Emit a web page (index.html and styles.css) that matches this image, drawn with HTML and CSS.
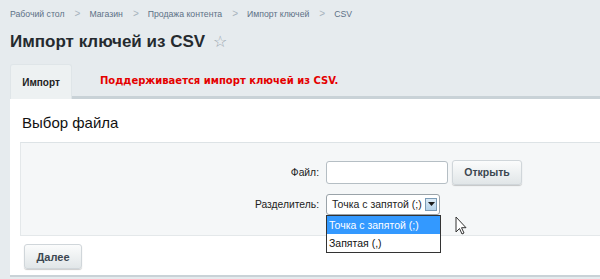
FILE: index.html
```html
<!DOCTYPE html>
<html>
<head>
<meta charset="utf-8">
<link rel="stylesheet" href="styles.css">
</head>
<body>
<div class="page">
  <nav class="crumbs">
    <span>Рабочий стол</span><span class="sep">&gt;</span>
    <span>Магазин</span><span class="sep">&gt;</span>
    <span>Продажа контента</span><span class="sep">&gt;</span>
    <span>Импорт ключей</span><span class="sep">&gt;</span>
    <span>CSV</span>
  </nav>
  <h1 class="title">Импорт ключей из CSV <span class="star">☆</span></h1>
  <div class="tabs">
    <div class="tab">Импорт</div>
    <div class="note">Поддерживается импорт ключей из CSV.</div>
  </div>
  <div class="panel">
    <h2 class="section">Выбор файла</h2>
    <div class="box">
      <div class="row">
        <label class="lbl">Файл:</label>
        <div class="field">
          <span class="input"></span>
          <span class="btn open">Открыть</span>
        </div>
      </div>
      <div class="row">
        <label class="lbl">Разделитель:</label>
        <div class="field">
          <div class="selwrap">
            <div class="select"><span>Точка с запятой (;)</span><span class="arrow"><svg width="7" height="4" viewBox="0 0 7 4"><path d="M0 0h7L3.5 4z" fill="#1a1a1a"/></svg></span></div>
            <div class="list">
              <div class="opt sel">Точка с запятой (;)</div>
              <div class="opt">Запятая (,)</div>
            </div>
          </div>
          <svg class="cursor" width="12" height="19" viewBox="0 0 12 19"><path d="M1 1v15l3.5-3.5 2.5 5.5 2-1-2.5-5.3H11z" fill="#fff" stroke="#333" stroke-width="1"/></svg>
        </div>
      </div>
    </div>
    <div class="footer"><span class="btn next">Далее</span></div>
  </div>
</div>
</body>
</html>
```
FILE: styles.css
```css
* { box-sizing: border-box; }
html, body { margin: 0; padding: 0; }
body {
  width: 600px; height: 279px; overflow: hidden;
  background: #e6ebee;
  font-family: "Liberation Sans", Arial, sans-serif;
  color: #000;
}
.page { padding: 0 0 0 10px; }
.crumbs {
  display: flex; align-items: center;
  height: 26px; padding-top: 1px;
  font-size: 8.7px; color: #5d7186;
}
.crumbs .sep { color: #a7b3bd; margin: 0 9px 0 10px; font-size: 10px; }
.title {
  margin: 0; height: 32px; line-height: 30px;
  font-size: 17px; font-weight: bold; color: #252a2e;
  display: flex; align-items: center;
}
.star { font-size: 16px; color: #9aa6ae; font-weight: normal; margin-left: 8px; }
.tabs {
  display: flex; align-items: flex-end;
  margin-top: 5px; height: 36px;
  border-bottom: 3px solid #c9d2d7;
}
.tab {
  width: 62px; height: 35px; margin-bottom: -3px;
  background: #edf1f2;
  border: 1px solid #dfe5e8; border-bottom: none;
  border-radius: 3px 3px 0 0;
  font-size: 10px; font-weight: bold; color: #222;
  display: flex; align-items: center; justify-content: center;
}
.note {
  align-self: center; margin-left: 28px;
  font-family: "DejaVu Sans", Verdana, sans-serif;
  font-size: 10px; font-weight: bold; color: #e40000;
  padding-top: 2px;
}
.panel {
  background: #fff; height: 178px;
  border-bottom: 2px solid #c9d2d7;
  padding: 0 0 0 10px;
}
.section {
  margin: 0; font-weight: normal; font-size: 15px; color: #111;
  height: 43px; line-height: 47px; padding-left: 2px;
}
.box {
  background: #f5f7f8;
  border-top: 1px solid #dde3e6; border-left: 1px solid #e4e8ea; border-bottom: 1px solid #e4e8ea;
  height: 94px; padding-top: 13px;
}
.row { display: flex; align-items: center; height: 32px; }
.lbl { width: 305px; text-align: right; font-size: 10.3px; color: #222; padding-right: 7px; }
.field { display: flex; align-items: center; gap: 4px; position: relative; }
.input {
  display: block; width: 122px; height: 23px;
  background: #fff; border: 1px solid #b5bec4; border-radius: 3px;
}
.btn {
  display: inline-flex; align-items: center; justify-content: center;
  height: 25px; border-radius: 3px;
  background: linear-gradient(#fbfcfc, #e1e6e8);
  border: 1px solid #d0d6da;
  box-shadow: 0 1px 1px rgba(0,0,0,0.2);
  font-size: 10.5px; font-weight: bold; color: #3b4650;
}
.open { width: 70px; }
.selwrap { position: relative; width: 114px; height: 21px; }
.select {
  height: 21px; width: 114px; white-space: nowrap;
  border: 1px solid #9aa3a9; border-radius: 3px; background: #fff;
  display: flex; align-items: center; justify-content: space-between;
  padding: 0 2px 0 5px; font-size: 10.5px; color: #222;
}
.arrow {
  width: 12px; height: 13px; background: linear-gradient(#dbeaf6, #b6d3ea);
  border: 1px solid #7b9bb6; display: flex; align-items: center; justify-content: center;
}
.list {
  position: absolute; left: 0; top: 21px; width: 115px;
  background: #fff; border: 1px solid #333; z-index: 2;
}
.opt { height: 18px; line-height: 18px; font-size: 10.5px; padding-left: 2px; color: #111; white-space: nowrap; }
.opt.sel { background: #3399ff; color: #fff; }
.cursor { position: absolute; left: 129px; top: 22px; }
.footer { padding: 8px 0 0 4px; }
.next { width: 58px; font-size: 11px; }
```
